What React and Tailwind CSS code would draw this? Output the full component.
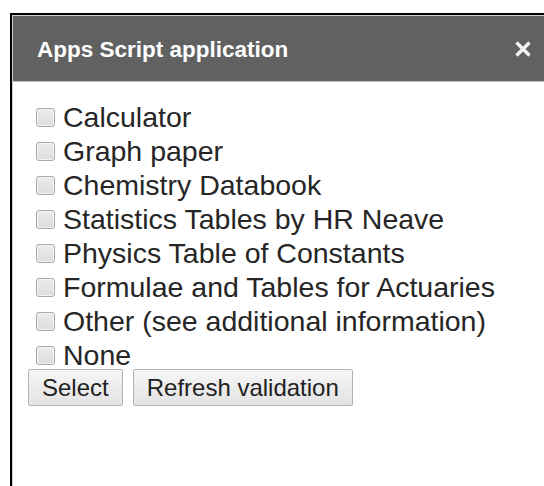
import React from "react";

const OPTIONS = [
  "Calculator",
  "Graph paper",
  "Chemistry Databook",
  "Statistics Tables by HR Neave",
  "Physics Table of Constants",
  "Formulae and Tables for Actuaries",
  "Other (see additional information)",
  "None",
];

// Close glyph for the title bar
const CloseIcon = () => (
  <svg width="18" height="18" viewBox="0 0 18 18" className="block">
    <path
      d="M2.5 2.5 L15.5 15.5 M15.5 2.5 L2.5 15.5"
      stroke="#f2f2f2"
      strokeWidth="3.4"
      strokeLinecap="butt"
      fill="none"
    />
  </svg>
);

const Checkbox = () => (
  <span className="inline-block w-[19px] h-[19px] shrink-0 rounded-[3px] border border-[#a9a9a9] bg-gradient-to-b from-[#ececec] to-[#dcdcdc] shadow-[inset_0_0_0_1px_#f4f4f4]" />
);

const Button = ({ children }) => (
  <button className="h-[37px] px-[13px] rounded-[2px] border border-[#b3b3b3] bg-gradient-to-b from-[#f6f6f6] to-[#e3e3e3] text-[24px] leading-none text-[#222]">
    {children}
  </button>
);

export default function App() {
  return (
    <div
      className="w-[544px] h-[486px] bg-white pt-[13px] pl-[10px] overflow-hidden"
      style={{ fontFamily: '"Liberation Sans", Arial, sans-serif' }}
    >
      <div className="h-full border-l-2 border-t-2 border-black">
        <div className="h-full border-l border-t border-[#cfcfcf] flex flex-col">
          <div className="h-[66px] shrink-0 bg-[#616161] border-b border-[#bdbdbd] flex items-center justify-between pl-[24px] pr-[12px]">
            <span className="text-white font-bold text-[22.5px] pt-[3px]">
              Apps Script application
            </span>
            <CloseIcon />
          </div>
          <div className="pt-[18px] pl-[23px]">
            {OPTIONS.map((label) => (
              <label
                key={label}
                className="flex items-center gap-[8px] h-[34px] text-[28.5px] text-[#262626]"
              >
                <Checkbox />
                <span>{label}</span>
              </label>
            ))}
            <div className="flex gap-[10px] -ml-[8px] mt-[-3px]">
              <Button>Select</Button>
              <Button>Refresh validation</Button>
            </div>
          </div>
        </div>
      </div>
    </div>
  );
}
